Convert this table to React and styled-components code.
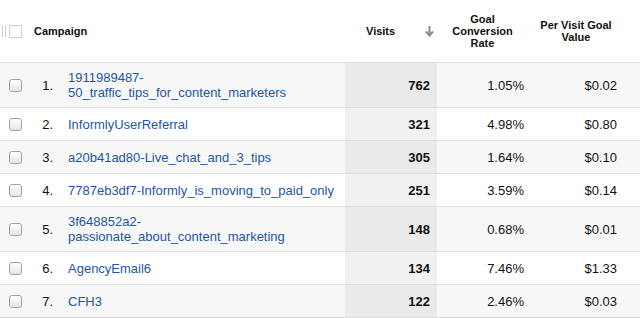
import React from 'react';
import styled, { createGlobalStyle } from 'styled-components';

const GlobalStyle = createGlobalStyle`
  html, body {
    margin: 0;
    padding: 0;
    background: #fff;
  }
  body {
    font-family: "Liberation Sans", Arial, Helvetica, sans-serif;
    color: #222;
  }
`;

// column widths, shared by header and body rows
const columns = '30px 28px 287px 92px 103px 100px';

const Table = styled.div`
  width: 640px;
`;

const HeaderRow = styled.div`
  display: grid;
  grid-template-columns: ${columns};
  height: 63px;
  box-sizing: border-box;
  border-bottom: 1px solid #dedede;
  font-size: 11px;
  font-weight: bold;
  line-height: 12px;
  color: #111;
`;

const HeadCell = styled.div`
  display: flex;
  align-items: center;
  justify-content: ${({ $align }) => $align || 'flex-start'};
  text-align: ${({ $text }) => $text || 'left'};
  padding: ${({ $pad }) => $pad || '0'};
  grid-column: ${({ $span }) => ($span ? `span ${$span}` : 'auto')};
`;

const Grip = styled.div`
  display: flex;
  align-items: center;
  gap: 2px;
  padding-left: 2px;
`;

const GripLine = styled.span`
  width: 1px;
  height: 12px;
  background: #cfcfcf;
`;

const HeadBox = styled.span`
  width: 11px;
  height: 11px;
  border: 1px solid #cfcfcf;
  margin-left: 1px;
`;

const SortArrow = styled.svg`
  width: 9px;
  height: 12px;
  margin-left: auto;
`;

const Row = styled.div`
  display: grid;
  grid-template-columns: ${columns};
  min-height: 33px;
  box-sizing: border-box;
  border-bottom: 1px solid #dedede;
  background: ${({ $odd }) => ($odd ? '#f7f7f7' : '#fff')};
  font-size: 13px;
  line-height: 15px;
`;

const Cell = styled.div`
  display: flex;
  align-items: center;
  justify-content: ${({ $right }) => ($right ? 'flex-end' : 'flex-start')};
  padding: 7px ${({ $pr }) => $pr || 0}px 7px ${({ $pl }) => $pl || 0}px;
  background: ${({ $shade, $odd }) =>
    $shade ? ($odd ? '#eaeaea' : '#f1f1f1') : 'transparent'};
  font-weight: ${({ $bold }) => ($bold ? 'bold' : 'normal')};
  color: #111;
`;

const Check = styled.span`
  width: 11px;
  height: 11px;
  margin-left: 9px;
  border: 1px solid #a3a3a3;
  border-radius: 3px;
  background: linear-gradient(#ffffff, #e6e6e6);
`;

const Link = styled.a`
  color: #1f55a5;
  text-decoration: none;
  word-break: break-all;
`;

const rows = [
  { name: ['1911989487-', '50_traffic_tips_for_content_marketers'], visits: 762, rate: '1.05%', value: '$0.02' },
  { name: ['InformlyUserReferral'], visits: 321, rate: '4.98%', value: '$0.80' },
  { name: ['a20b41ad80-Live_chat_and_3_tips'], visits: 305, rate: '1.64%', value: '$0.10' },
  { name: ['7787eb3df7-Informly_is_moving_to_paid_only'], visits: 251, rate: '3.59%', value: '$0.14' },
  { name: ['3f648852a2-', 'passionate_about_content_marketing'], visits: 148, rate: '0.68%', value: '$0.01' },
  { name: ['AgencyEmail6'], visits: 134, rate: '7.46%', value: '$1.33' },
  { name: ['CFH3'], visits: 122, rate: '2.46%', value: '$0.03' },
];

export default function App() {
  return (
    <>
      <GlobalStyle />
      <Table>
        <HeaderRow>
          <HeadCell>
            <Grip>
              <GripLine />
              <GripLine />
              <HeadBox />
            </Grip>
          </HeadCell>
          <HeadCell $span={2} $pad="0 0 0 4px">Campaign</HeadCell>
          <HeadCell $pad="0 3px 0 21px">
            Visits
            <SortArrow viewBox="0 0 9 12">
              <path d="M4.5 1v9" stroke="#8a8a8a" strokeWidth="2" fill="none" />
              <path d="M1 6.5l3.5 4 3.5-4" stroke="#8a8a8a" strokeWidth="2" fill="none" />
            </SortArrow>
          </HeadCell>
          <HeadCell $align="center" $text="center" $pad="0 12px 0 0">
            Goal<br />Conversion<br />Rate
          </HeadCell>
          <HeadCell $align="center" $text="center" $pad="0 28px 0 0">
            Per Visit Goal<br />Value
          </HeadCell>
        </HeaderRow>

        {rows.map((r, i) => {
          const odd = i % 2 === 0;
          return (
            <Row key={i} $odd={odd}>
              <Cell><Check /></Cell>
              <Cell $right $pr={5}>{i + 1}.</Cell>
              <Cell $pl={10}>
                <Link href="#">
                  {r.name.map((part, j) => (
                    <React.Fragment key={j}>
                      {j > 0 && <br />}
                      {part}
                    </React.Fragment>
                  ))}
                </Link>
              </Cell>
              <Cell $right $pr={7} $shade $odd={odd} $bold>{r.visits}</Cell>
              <Cell $right $pr={16}>{r.rate}</Cell>
              <Cell $right $pr={23}>{r.value}</Cell>
            </Row>
          );
        })}
      </Table>
    </>
  );
}
